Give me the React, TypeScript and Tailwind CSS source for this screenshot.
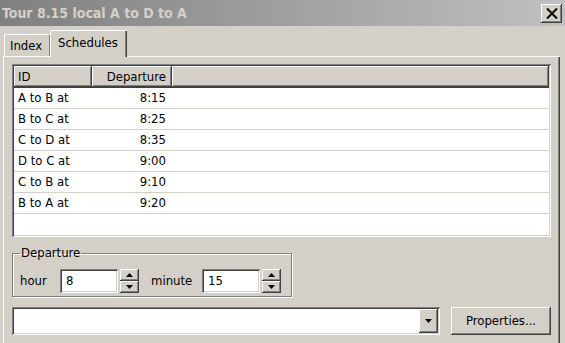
const raised =
	"bg-[#d4d0c8] shadow-[inset_-1px_-1px_#404040,inset_1px_1px_#ffffff,inset_-2px_-2px_#808080]";
const sunken =
	"bg-white shadow-[inset_1px_1px_#808080,inset_-1px_-1px_#ffffff,inset_2px_2px_#404040,inset_-2px_-2px_#d4d0c8]";

const rows = [
	{ id: "A to B at", dep: "8:15" },
	{ id: "B to C at", dep: "8:25" },
	{ id: "C to D at", dep: "8:35" },
	{ id: "D to C at", dep: "9:00" },
	{ id: "C to B at", dep: "9:10" },
	{ id: "B to A at", dep: "9:20" },
];

const Arrow = ({ up }: { up?: boolean }) => (
	<svg width="7" height="4" viewBox="0 0 7 4">
		<path d={up ? "M3.5 0 L7 4 L0 4 Z" : "M0 0 L7 0 L3.5 4 Z"} fill="#000" />
	</svg>
);

const Spin = () => (
	<div className="flex flex-col w-[19px] h-[24px]">
		<button type="button" className={`${raised} h-[12px] flex items-center justify-center`}>
			<Arrow up />
		</button>
		<button type="button" className={`${raised} h-[12px] flex items-center justify-center`}>
			<Arrow />
		</button>
	</div>
);

const App = () => {
	return (
		<div
			className="w-[565px] h-[343px] overflow-hidden bg-[#d4d0c8] flex flex-col text-[13px] text-black"
			style={{ fontFamily: '"DejaVu Sans Condensed", Tahoma, "Liberation Sans", sans-serif' }}
		>
			<div className="h-[26px] shrink-0 flex items-center justify-between bg-gradient-to-r from-[#808080] to-[#c0c0c0] pl-[2px] pr-[3px]">
				<span className="font-bold text-[14px] text-[#d4d0c8] leading-none">
					Tour 8.15 local A to D to A
				</span>
				<button type="button" className={`${raised} w-[21px] h-[19px] flex items-center justify-center`}>
					<svg width="12" height="11" viewBox="0 0 12 11">
						<path d="M1 0.5 L11 10.5 M11 0.5 L1 10.5" stroke="#000" strokeWidth="2" />
					</svg>
				</button>
			</div>

			<div className="flex items-end h-[30px] shrink-0 pl-[4px]">
				<div className="w-[46px] h-[22px] pl-[5px] flex items-center border-l border-t border-white rounded-tl-[2px] shadow-[inset_-1px_0_#808080]">
					Index
				</div>
				<div className="relative z-10 w-[77px] h-[27px] -mb-[1px] pl-[7px] flex items-center bg-[#d4d0c8] border-l border-t border-white rounded-tl-[2px] shadow-[inset_-1px_0_#404040,inset_-2px_0_#808080]">
					<span className="-mt-[3px]">Schedules</span>
				</div>
			</div>

			<div className="flex-1 ml-[3px] w-[557px] border-l border-t border-white shadow-[inset_-1px_0_#404040,inset_-2px_0_#808080] pl-[8px] pt-[7px]">
				<div className={`${sunken} w-[539px] h-[173px] p-[2px] flex flex-col`}>
					<div className="flex h-[21px] shrink-0 shadow-[0_1px_#404040]">
						<div className={`${raised} w-[78px] pl-[4px] flex items-center`}>ID</div>
						<div className={`${raised} w-[80px] pr-[6px] flex items-center justify-end`}>Departure</div>
						<div className={`${raised} flex-1`} />
					</div>
					<div className="mt-[1px]">
						{rows.map((r) => (
							<div key={r.id} className="flex h-[21px] items-center border-b border-[#d4d0c8]">
								<div className="w-[78px] pl-[4px]">{r.id}</div>
								<div className="w-[80px] pr-[6px] text-right">{r.dep}</div>
							</div>
						))}
					</div>
				</div>

				<fieldset className="mt-[8px] w-[280px] border border-[#808080] shadow-[inset_1px_1px_#ffffff,1px_1px_#ffffff] px-[7px] pt-[8px] pb-[3px]">
					<legend className="px-[1px] leading-[16px]">Departure</legend>
					<div className="flex items-center">
						<span className="w-[30px]">hour</span>
						<div className={`${sunken} ml-[10px] w-[58px] h-[24px] pl-[6px] flex items-center`}>8</div>
						<div className="ml-[2px]">
							<Spin />
						</div>
						<span className="ml-[12px] w-[41px]">minute</span>
						<div className={`${sunken} ml-[10px] w-[58px] h-[24px] pl-[6px] flex items-center`}>15</div>
						<div className="ml-[2px]">
							<Spin />
						</div>
					</div>
				</fieldset>

				<div className="mt-[10px] flex items-start">
					<div className={`${sunken} w-[428px] h-[28px] p-[2px] flex justify-end`}>
						<button type="button" className={`${raised} w-[19px] h-[24px] flex items-center justify-center`}>
							<Arrow />
						</button>
					</div>
					<button type="button" className={`${raised} ml-[11px] w-[100px] h-[28px] flex items-center justify-center`}>
						Properties...
					</button>
				</div>
			</div>
		</div>
	);
};

export default App;
